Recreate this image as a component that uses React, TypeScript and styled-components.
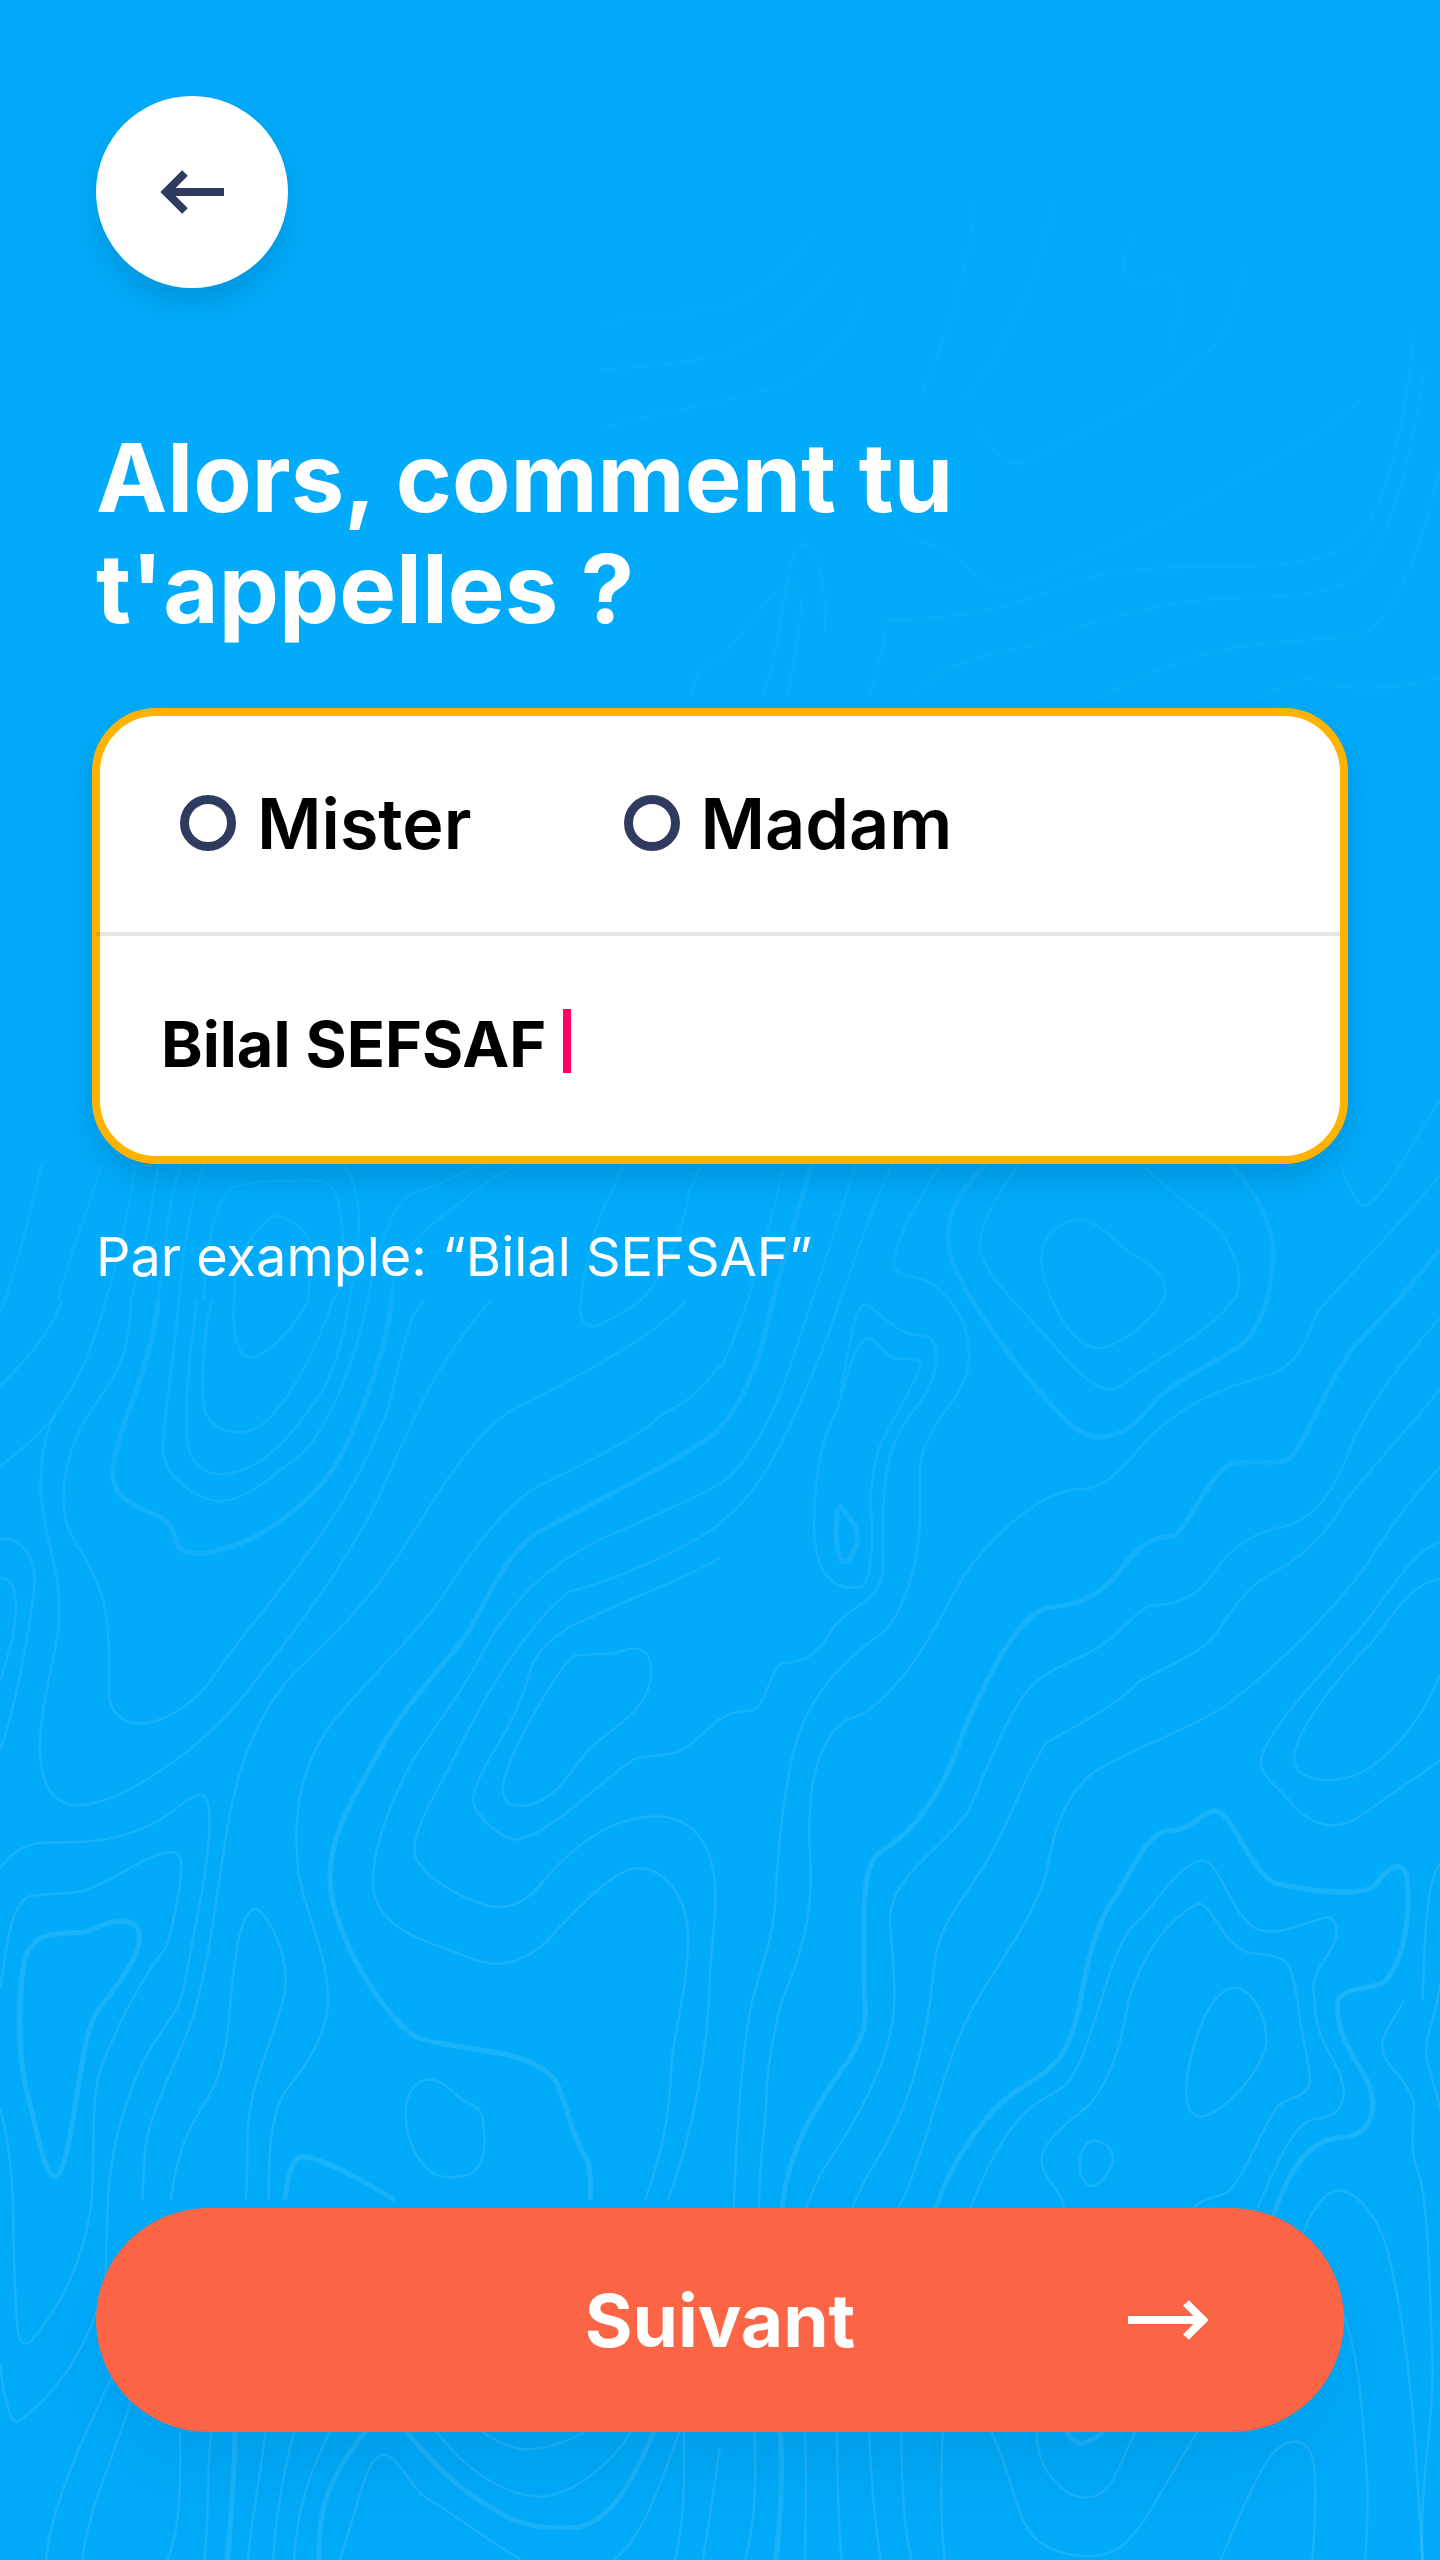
import { FC } from "react";
import styled, { createGlobalStyle } from "styled-components";

const colors = {
  sky: "#01abfa",
  navy: "#2f3a5f",
  amber: "#ffb300",
  coral: "#fb6444",
  caret: "#ff0066",
};

// contour lines, traced per region of the screen: [translate x, translate y, scale x, scale y, paths]
// a path starting with "!" is one of the thicker index lines
type Region = [number, number, number, number, string[]];

const contourRegions: Region[] = [
  [600, 200, 0.5357, 0.3333, [
    "M0 380C50 340 150 350 230 320C300 280 350 200 400 100",
    "M0 510C80 500 200 490 270 440C340 380 400 310 440 200",
    "M0 690C80 640 220 620 350 550C430 480 470 400 490 300",
    "M710 690C730 750 760 800 790 790C880 720 900 700 1000 620C1060 560 1100 510 1150 430C1180 360 1190 300 1200 200",
    "M550 940C560 1000 590 1030 640 1040C680 1080 710 1160 750 1165C820 1150 870 1090 950 1040C1040 980 1100 930 1150 880C1250 780 1340 720 1420 600",
    "M170 1500C175 1420 190 1400 220 1380C280 1290 320 1150 360 1150C390 1170 370 1300 350 1500",
    "M300 1500C350 1300 340 1060 380 1030C420 1060 420 1200 420 1300",
    "M500 1500C520 1390 540 1290 530 1260C620 1260 730 1240 830 1180C930 1100 1060 1100 1160 1100C1260 1100 1380 1090 1420 1000C1470 900 1500 700 1520 400",
    "M580 1500C620 1400 720 1360 800 1340C920 1260 1050 1200 1180 1195C1270 1190 1360 1190 1410 1130C1480 1020 1510 800 1540 500",
    "M920 1500C1050 1400 1120 1350 1240 1330C1300 1320 1400 1320 1440 1290C1500 1200 1540 1000 1568 800",
    "M1230 1500C1270 1460 1310 1430 1330 1435C1380 1470 1480 1480 1568 1430",
    "M1000 100C950 220 990 290 1050 230C1090 240 1090 320 1060 440",
    "M700 0C690 200 650 400 600 580",
    "M850 0C820 200 780 400 680 600",
  ]],
  [0, 1160, 0.4592, 0.3333, [
    "M445 420C445 300 460 150 500 90C530 60 620 60 700 62C740 80 745 150 750 300C750 350 740 400 725 420",
    "M510 420C510 340 530 220 600 165C640 180 680 220 680 280C675 340 670 400 672 420",
    "M0 460C30 350 60 200 90 12",
    "M125 420C150 300 190 150 222 12",
    "M230 420C260 300 280 150 295 12",
    "M285 420C310 300 330 150 345 12",
    "M345 420C360 250 370 100 395 12",
    "M390 420C400 250 420 100 445 12",
    "M762 420C790 200 790 100 750 12",
    "M800 420C830 250 850 130 900 100C950 80 1010 30 1060 12",
    "M852 420C855 300 880 250 1000 130C1050 70 1100 30 1140 12",
    "M1265 420C1270 350 1290 200 1330 100L1360 12",
    "M1395 420C1450 350 1490 200 1500 100C1510 70 1520 30 1530 12",
  ]],
  [0, 1300, 0.4592, 0.574, [
    "!M345 0C330 120 250 230 245 300C245 350 300 360 340 375C370 385 378 400 385 425C400 450 450 445 520 425C600 400 680 345 720 300C770 240 840 100 852 0",
    "M390 0C380 90 355 210 355 260C358 310 430 350 480 350C540 350 600 300 655 270C720 220 780 90 800 0",
    "M430 0C415 80 400 180 408 250C420 300 470 310 510 300C590 285 650 220 700 160C730 120 750 60 762 0",
    "M460 0C445 60 435 140 445 190C460 230 520 240 565 220C620 190 690 90 725 0",
    "M510 0C505 50 515 100 545 100C580 100 640 50 672 0",
    "M285 0C280 100 260 120 200 190C160 240 130 300 140 370C150 420 180 430 210 490C245 550 235 620 237 690C245 730 280 738 310 738C370 735 440 690 470 650C520 590 600 520 680 430C750 350 790 300 840 200C870 130 880 30 925 0",
    "M230 0C200 90 170 140 120 200C90 240 85 310 90 350C100 420 130 470 130 550C125 620 85 700 87 790C90 850 120 880 170 880C260 880 420 790 510 710C600 620 700 520 780 410C860 310 900 150 1070 0",
    "M135 0C110 60 50 110 0 150",
    "M0 290C50 260 90 230 120 200",
    "M0 418C40 410 75 440 75 490C70 560 30 720 0 785",
    "M0 485C25 480 37 510 35 545C30 590 15 630 0 665",
    "!M1568 225C1480 280 1300 350 1170 405C1090 450 1060 530 1010 590C950 650 870 720 830 780C790 840 740 900 725 960C710 1010 720 1050 750 1110C790 1190 870 1270 910 1285C1000 1310 1150 1300 1210 1360C1240 1410 1240 1450 1280 1500C1290 1530 1285 1550 1285 1568",
    "M1568 320C1480 360 1380 390 1300 420C1200 460 1110 520 1040 630C1000 690 950 740 900 800C860 860 810 950 812 1020C820 1100 940 1120 1020 1145C1100 1175 1170 1140 1210 1100C1270 1050 1340 990 1390 990C1450 990 1490 1040 1497 1090C1505 1170 1470 1270 1462 1330C1460 1420 1440 1490 1405 1568",
    "M1568 390C1480 440 1330 490 1240 508C1170 550 1080 650 1000 780C950 860 900 920 903 960C905 1000 1000 1040 1060 1055C1110 1065 1150 1045 1180 1015C1240 960 1320 900 1430 900C1510 900 1555 950 1558 1030C1560 1090 1545 1140 1545 1200C1540 1300 1515 1440 1455 1568",
    "M1568 450C1480 490 1340 530 1240 570C1190 595 1160 620 1150 660C1130 710 1110 740 1080 780C1050 820 1030 850 1030 875C1040 900 1090 940 1125 940C1200 930 1290 850 1380 800C1420 790 1470 800 1510 770C1530 755 1550 740 1568 730",
    "M1250 620C1290 615 1330 620 1360 610C1400 600 1418 615 1418 650C1415 720 1320 750 1280 785C1240 825 1210 870 1150 880C1110 885 1095 875 1095 850C1100 800 1190 680 1230 635Z",
    "M1568 110C1530 160 1490 180 1440 200C1390 240 1260 290 1170 325C1090 360 1000 470 960 520C900 590 810 650 720 740C640 830 640 920 650 1000C670 1080 710 1130 715 1220C710 1290 660 1340 620 1380C590 1420 585 1480 585 1568",
    "M1495 0C1430 60 1270 130 1130 185C1040 220 950 340 880 430C810 520 720 590 640 650C570 710 520 800 495 920C470 1040 460 1140 420 1250C390 1320 340 1390 320 1460C312 1500 312 1530 310 1568",
    "M1265 0C1260 30 1270 50 1300 45C1330 35 1370 15 1395 0",
    "M0 990C30 955 70 945 100 945C160 945 260 950 360 900C400 875 430 855 445 865C465 880 455 960 440 1030C420 1110 410 1160 400 1200C385 1250 340 1280 310 1330C270 1400 240 1480 235 1568",
    "M0 1200C15 1130 20 1060 60 1040C100 1030 170 1040 210 1020C270 1000 330 960 380 962C400 965 395 990 390 1030C380 1070 370 1120 355 1135C300 1190 240 1290 215 1350C200 1400 205 1490 200 1568",
    "!M80 1115C110 1100 160 1105 190 1100C230 1085 280 1070 300 1095C320 1130 260 1190 215 1235C190 1265 185 1300 170 1370C155 1450 140 1525 120 1528C95 1525 80 1440 60 1385C35 1310 40 1180 60 1135Z",
    "M555 1060C580 1065 625 1130 622 1190C615 1260 550 1340 540 1440C537 1490 540 1530 535 1568",
    "M555 1060C520 1070 510 1150 500 1240C490 1340 470 1370 430 1420C400 1460 380 1510 372 1568",
    "M935 1358C965 1358 990 1385 1010 1395C1040 1405 1055 1410 1055 1460C1055 1525 1020 1530 970 1528C920 1525 885 1470 883 1420C883 1380 905 1358 935 1358Z",
    "!M620 1568C630 1510 640 1490 665 1493C720 1500 800 1540 860 1568",
    "M0 1410C15 1450 25 1510 28 1568",
  ]],
  [720, 1100, 0.4592, 0.574, [
    "M920 112C960 150 1050 200 1085 225C1125 270 1140 310 1125 340C1080 400 950 450 870 500C830 515 780 480 720 420C650 360 560 290 565 250C570 200 620 150 650 112",
    "!M1110 112C1170 160 1205 220 1205 270C1200 340 1180 400 1130 430C1050 470 980 490 930 540C880 590 820 600 770 570C690 510 560 380 510 290C480 230 500 170 580 112",
    "M780 208C830 210 860 250 900 270C950 290 975 310 970 340C950 380 870 430 825 432C770 430 730 370 705 310C690 260 710 215 780 208Z",
    "M480 112C420 190 370 260 380 295C400 310 440 305 470 325C520 360 550 400 540 470C520 530 450 560 435 640C435 720 440 760 420 820C400 880 380 910 350 930C280 970 220 1020 190 1070C150 1130 130 1250 120 1400C115 1460 90 1510 70 1568",
    "M315 355C345 365 380 410 440 410C480 415 480 460 450 510C420 550 370 570 358 680C353 740 355 780 355 820C350 870 290 880 250 915C220 960 190 980 135 982C110 990 100 1060 65 1065C35 1063 15 1070 0 1080",
    "M325 415C345 420 360 445 380 450C400 452 440 448 438 460C430 490 370 560 345 610C320 680 330 720 332 760C330 810 320 845 308 848C260 855 210 840 205 750C205 660 220 590 250 550C270 510 290 415 325 415",
    "M315 355C290 365 280 440 262 510",
    "!M262 708C275 720 300 745 300 760C295 790 280 805 268 805C255 800 250 760 255 725C255 715 258 708 262 708Z",
    "!M200 112C170 190 130 300 100 400C80 470 40 540 0 570",
    "M295 112C250 230 210 330 150 470C110 570 50 640 0 670",
    "M375 112C310 220 260 370 200 480C140 600 70 700 0 735",
    "M140 112C90 280 50 390 0 470",
    "M1568 130C1500 200 1400 280 1300 370C1270 440 1240 470 1190 480C1100 500 1000 530 920 600C870 650 830 680 780 678C700 680 590 760 530 830C480 900 440 970 380 1020C340 1060 300 1075 275 1080C220 1110 190 1180 195 1300C205 1390 190 1470 135 1568",
    "!M1568 260C1500 330 1440 380 1380 430C1330 480 1280 590 1240 625C1200 640 1140 620 1100 640C1060 665 1020 740 990 760C950 760 920 770 880 810C830 870 770 880 710 885C650 900 590 990 530 1100C490 1200 430 1270 350 1310C310 1330 310 1400 315 1568",
    "M1568 380C1500 440 1430 510 1380 590C1340 680 1300 730 1220 745C1150 755 1100 790 1070 830C1030 870 990 880 940 880C900 890 880 930 810 960C750 985 710 995 680 1020C630 1060 590 1150 540 1240C480 1310 370 1350 370 1430C375 1480 380 1510 380 1568",
    "M1568 505C1500 570 1420 640 1360 700C1310 770 1260 800 1190 830C1130 860 1110 900 1080 930C1040 970 960 990 910 1015C870 1050 800 1080 710 1120C660 1180 620 1280 570 1340C520 1400 480 1440 470 1490C465 1520 460 1550 458 1568",
    "M1568 640C1520 680 1460 740 1400 820C1300 920 1190 1000 1110 1050C1020 1100 860 1140 800 1180C750 1220 730 1260 710 1350C680 1430 600 1510 560 1568",
    "M1568 770C1520 780 1470 840 1420 895C1350 970 1190 1090 1178 1150C1175 1180 1210 1190 1250 1230C1290 1265 1340 1275 1390 1250C1450 1215 1520 1180 1568 1150",
    "M1568 835C1510 840 1470 890 1420 945C1350 1000 1250 1100 1250 1150C1255 1185 1320 1190 1370 1180C1450 1160 1530 1080 1568 1000",
    "!M785 1568C800 1500 820 1430 860 1390C900 1340 930 1270 985 1272C1020 1275 1050 1240 1080 1238C1120 1245 1150 1340 1210 1365C1270 1375 1380 1390 1425 1370C1450 1340 1480 1320 1495 1350C1505 1420 1490 1510 1440 1540C1400 1550 1370 1545 1345 1568",
    "M830 1568C860 1490 880 1450 910 1430C950 1400 1000 1330 1050 1325C1090 1325 1110 1420 1170 1445C1230 1460 1300 1420 1330 1425C1350 1440 1345 1460 1330 1480C1300 1520 1285 1530 1295 1568",
    "M890 1568C920 1490 970 1430 1040 1400C1075 1400 1090 1470 1150 1485C1200 1490 1235 1490 1245 1520L1258 1568",
    "M1350 112C1360 130 1380 180 1405 185C1450 170 1540 30 1568 0",
    "M1568 1330C1540 1360 1535 1440 1530 1568",
  ]],
  [0, 1900, 0.4592, 0.4209, [
    "M28 713C30 820 30 950 40 1030C45 1055 55 1060 70 1045C120 980 180 880 200 713",
    "M0 1100C10 1200 25 1245 40 1240C90 1200 190 1100 230 900C230 820 235 760 235 713",
    "M100 1568C110 1450 170 1300 245 1130",
    "M180 1568C190 1450 240 1350 285 1190",
    "M365 1568C390 1500 395 1400 392 1263",
    "M445 1568C455 1480 450 1350 460 1263",
    "!M495 1568C505 1450 510 1350 512 1263",
    "M540 1568C550 1450 570 1350 578 1263",
    "M595 1568C600 1450 620 1350 640 1263",
    "M640 1568C650 1420 680 1350 718 1263",
    "!M695 1568C690 1440 720 1370 795 1263",
    "M740 1568C790 1400 800 1320 835 1318C870 1320 900 1410 935 1425C990 1460 1060 1520 1135 1568",
    "!M885 1263C950 1350 1010 1410 1080 1450C1130 1490 1200 1495 1260 1490C1340 1470 1380 1370 1425 1263",
    "M950 1263C1010 1350 1090 1410 1170 1418C1250 1415 1330 1340 1375 1263",
    "M1050 1263C1090 1295 1120 1305 1150 1305C1190 1305 1240 1285 1275 1263",
    "M1335 1568C1400 1520 1440 1380 1480 1263",
    "M1490 1263C1490 1400 1490 1480 1470 1568",
    "M1530 1568C1550 1450 1560 1350 1568 1300",
  ]],
  [720, 1900, 0.4592, 0.4209, [
    "M70 238C50 340 35 550 30 732",
    "M135 238C120 300 100 400 100 500C90 600 85 680 85 732",
    "!M315 238C320 290 315 320 280 380C220 470 150 580 135 732",
    "M380 238C375 380 300 520 225 640C205 680 195 710 188 732",
    "M458 238C440 380 400 520 340 620C315 660 300 700 288 732",
    "M560 238C500 350 470 500 430 620C415 670 400 710 388 732",
    "!M785 238C760 370 740 390 650 450C570 510 500 630 470 732",
    "M830 238C800 340 780 420 740 450C680 490 630 500 545 732",
    "M890 238C870 360 850 420 810 480C760 530 700 570 700 620C705 670 735 670 750 732",
    "M1120 208C1170 215 1190 290 1190 340C1180 410 1090 515 1045 515C1015 510 1010 470 1020 400C1040 300 1070 215 1120 208Z",
    "M815 572C845 575 860 600 855 625C845 655 825 680 808 680C790 675 780 650 785 610C790 585 800 572 815 572Z",
    "M1258 238C1265 320 1285 390 1285 430C1280 470 1240 465 1215 490C1180 540 1150 640 1110 690C1090 710 1060 700 1030 732",
    "M1295 238C1295 310 1320 350 1345 400C1365 450 1370 510 1300 520C1250 525 1220 610 1170 732",
    "!M1345 238C1340 320 1380 370 1410 430C1435 500 1420 560 1350 565C1280 570 1240 640 1205 750",
    "M1490 238C1470 280 1440 320 1442 350C1445 400 1500 420 1512 490C1505 570 1505 610 1525 660C1545 760 1545 950 1552 1100C1555 1250 1520 1400 1530 1568",
    "M1270 790C1290 730 1320 690 1350 690C1390 695 1430 750 1450 820C1490 980 1510 1200 1520 1400L1530 1568",
    "M1350 965C1390 1060 1400 1200 1410 1400C1410 1480 1408 1530 1405 1568",
    "M1568 200C1560 280 1530 330 1540 380C1550 430 1568 480 1568 500",
    "M75 1263C80 1400 75 1480 55 1568",
    "!M130 1263C140 1340 130 1480 122 1568",
    "M185 1263C190 1400 185 1500 185 1568",
    "M255 1263C255 1400 260 1500 265 1568",
    "M325 1263C330 1400 340 1500 350 1568",
    "M395 1263C395 1400 400 1500 418 1568",
    "M485 1263C480 1400 480 1500 490 1568",
    "M590 1263C640 1370 640 1470 690 1520C750 1570 840 1570 880 1530C930 1480 950 1420 1040 1263",
    "M690 1263C690 1340 720 1380 760 1410C800 1430 830 1420 855 1380L905 1263",
    "!M755 1263C770 1295 790 1305 835 1263",
    "M1090 1568C1130 1470 1160 1380 1200 1320C1240 1270 1290 1270 1295 1360C1298 1430 1295 1500 1290 1568",
  ]],
];

const App: FC = () => {
  return (
    <Page>
      <GlobalStyle />

      <Contours viewBox="0 0 1440 2560" aria-hidden="true">
        {contourRegions.map(([x, y, sx, sy, paths]) => (
          <g key={`${x}-${y}`} transform={`translate(${x} ${y}) scale(${sx} ${sy})`}>
            {paths.map((d) => (
              <Contour key={d} d={d.replace("!", "")} $thick={d.startsWith("!")} />
            ))}
          </g>
        ))}
      </Contours>

      <BackButton type="button" aria-label="Retour">
        <svg width="66" height="44" viewBox="0 0 66 44" fill="none">
          <path d="M27 3 8 22l19 19M8 22h58" stroke={colors.navy} strokeWidth="8" />
        </svg>
      </BackButton>

      <Title>
        Alors, comment tu
        <br />
        t'appelles ?
      </Title>

      <Card>
        <Civility>
          <Option>
            <Radio />
            Mister
          </Option>
          <Option>
            <Radio />
            Madam
          </Option>
        </Civility>
        <Divider />
        <NameRow>
          <NameText>Bilal SEFSAF</NameText>
          <Caret />
        </NameRow>
      </Card>

      <Hint>Par example: “Bilal SEFSAF”</Hint>

      <NextButton type="button">
        <span />
        <NextLabel>Suivant</NextLabel>
        <NextArrow width="80" height="44" viewBox="0 0 80 44" fill="none">
          <path d="M0 22h76M58 5l17 17-17 17" stroke="#fff" strokeWidth="8" />
        </NextArrow>
      </NextButton>
    </Page>
  );
};

export default App;

const GlobalStyle = createGlobalStyle`
  body {
    margin: 0;
    font-family: Inter, "Liberation Sans", sans-serif;
    background: ${colors.sky};
  }
`;

const Page = styled.div`
  position: relative;
  display: flex;
  flex-direction: column;
  align-items: flex-start;
  box-sizing: border-box;
  width: 1440px;
  height: 2560px;
  padding: 96px 96px 128px;
  overflow: hidden;
  background: ${colors.sky};
`;

const Contours = styled.svg`
  position: absolute;
  inset: 0;
  width: 1440px;
  height: 2560px;
  mask-image: linear-gradient(
    to bottom,
    rgba(0, 0, 0, 0.2) 0,
    rgba(0, 0, 0, 0.3) 700px,
    rgba(0, 0, 0, 0.6) 1300px,
    #000 1900px
  );
`;

const Contour = styled.path<{ $thick?: boolean }>`
  fill: none;
  stroke: rgba(255, 255, 255, 0.1);
  stroke-width: ${(p) => (p.$thick ? "5px" : "2.5px")};
  vector-effect: non-scaling-stroke;
`;

const BackButton = styled.button`
  position: relative;
  display: flex;
  align-items: center;
  justify-content: center;
  flex: none;
  width: 192px;
  height: 192px;
  padding: 0;
  border: none;
  border-radius: 50%;
  background: #fff;
  box-shadow: 0 16px 32px rgba(0, 50, 90, 0.18);

  svg {
    margin-left: -2px;
  }
`;

const Title = styled.h1`
  position: relative;
  margin: 134px 0 0;
  font-size: 95.5px;
  font-weight: 700;
  line-height: 111px;
  color: #fff;
`;

const Card = styled.div`
  position: relative;
  align-self: stretch;
  box-sizing: border-box;
  height: 456px;
  margin: 64px -4px 0;
  border: 8px solid ${colors.amber};
  border-radius: 64px;
  background: #fff;
  box-shadow: 0 16px 32px rgba(0, 50, 90, 0.18);
`;

const Civility = styled.div`
  display: flex;
  align-items: center;
  gap: 152px;
  height: 216px;
  padding: 0 0 2px 80px;
  box-sizing: border-box;
`;

const Option = styled.label`
  display: flex;
  align-items: center;
  gap: 21px;
  font-size: 70px;
  font-weight: 600;
  color: #000;
`;

const Radio = styled.span`
  box-sizing: border-box;
  width: 56px;
  height: 56px;
  border: 9px solid ${colors.navy};
  border-radius: 50%;
`;

const Divider = styled.div`
  height: 4px;
  margin: 0 0 0 -4px;
  background: rgba(0, 0, 0, 0.1);
`;

const NameRow = styled.div`
  display: flex;
  align-items: center;
  height: 210px;
  padding-left: 61px;
`;

const NameText = styled.span`
  margin-top: 6px;
  font-size: 63px;
  font-weight: 700;
  color: #000;
`;

const Caret = styled.span`
  width: 8px;
  height: 64px;
  margin-left: 17px;
  background: ${colors.caret};
`;

const Hint = styled.p`
  position: relative;
  margin: 60px 0 0;
  font-size: 54px;
  font-weight: 400;
  line-height: 66px;
  color: #fff;
`;

const NextButton = styled.button`
  position: relative;
  display: grid;
  grid-template-columns: 1fr auto 1fr;
  align-items: center;
  align-self: stretch;
  flex: none;
  height: 224px;
  margin-top: auto;
  padding: 0 136px 0 0;
  border: none;
  border-radius: 112px;
  background: ${colors.coral};
  box-shadow: 0 40px 80px rgba(0, 50, 90, 0.1);
`;

const NextLabel = styled.span`
  font-family: Inter, "Liberation Sans", sans-serif;
  font-size: 73px;
  font-weight: 700;
  color: #fff;
  transform: translateX(68px);
`;

const NextArrow = styled.svg`
  justify-self: end;
`;
